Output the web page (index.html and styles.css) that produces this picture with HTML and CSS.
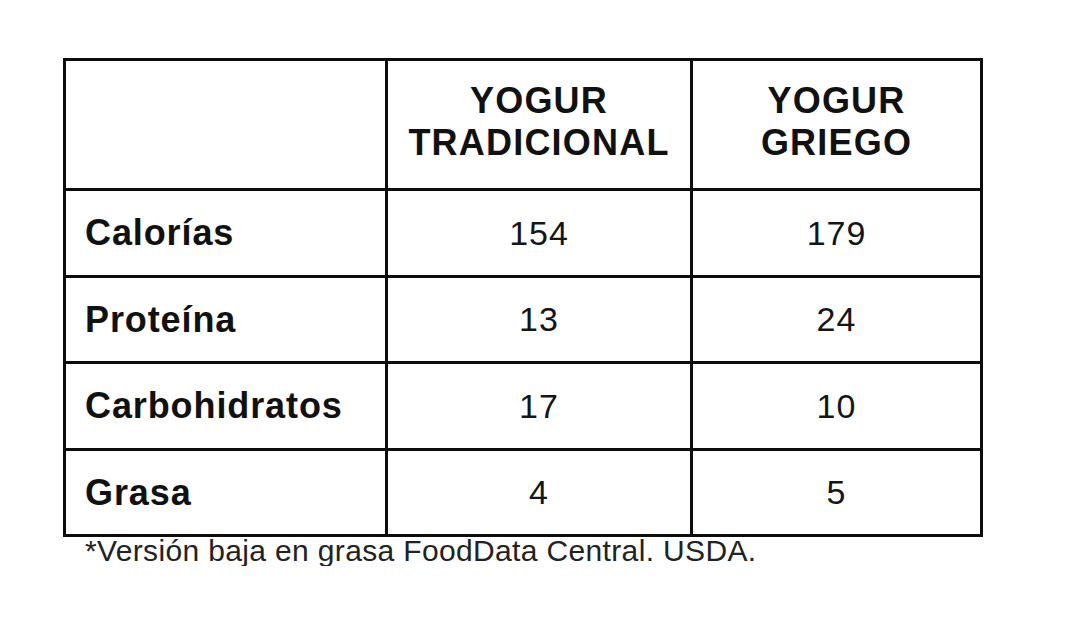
FILE: index.html
```html
<!DOCTYPE html>
<html lang="es">
<head>
<meta charset="utf-8">
<title>Yogur tradicional vs griego</title>
<link rel="stylesheet" href="styles.css">
</head>
<body>
<main class="page">
  <table class="nutri">
    <colgroup>
      <col class="c-label">
      <col class="c-trad">
      <col class="c-grie">
    </colgroup>
    <thead>
      <tr class="head-row">
        <th></th>
        <th>YOGUR<br>TRADICIONAL</th>
        <th>YOGUR<br>GRIEGO</th>
      </tr>
    </thead>
    <tbody>
      <tr class="r1">
        <th class="label">Calorías</th>
        <td>154</td>
        <td>179</td>
      </tr>
      <tr class="r2">
        <th class="label">Proteína</th>
        <td>13</td>
        <td>24</td>
      </tr>
      <tr class="r3">
        <th class="label">Carbohidratos</th>
        <td>17</td>
        <td>10</td>
      </tr>
      <tr class="r4">
        <th class="label">Grasa</th>
        <td>4</td>
        <td>5</td>
      </tr>
    </tbody>
  </table>
  <p class="note">*Versión baja en grasa FoodData Central. USDA.</p>
</main>
</body>
</html>
```

FILE: styles.css
```css
* { box-sizing: border-box; }

html, body {
  margin: 0;
  padding: 0;
  background: #ffffff;
}

body {
  font-family: "Liberation Sans", Arial, sans-serif;
  color: #111111;
}

.page {
  padding: 58px 0 0 63px;
}

.nutri {
  width: 920px;
  table-layout: fixed;
  border-collapse: separate;
  border-spacing: 0;
  border: 3px solid #0d0d0d;
}

.c-label { width: 322px; }
.c-trad { width: 305px; }
.c-grie { width: 287px; }

.nutri th,
.nutri td {
  padding: 0;
  border-right: 3px solid #0d0d0d;
  border-bottom: 3px solid #0d0d0d;
  text-align: center;
  vertical-align: middle;
}

.nutri tr > :last-child { border-right: none; }
.nutri tbody tr:last-child > * { border-bottom: none; }

.head-row th {
  height: 130px;
  font-size: 36px;
  line-height: 42px;
  font-weight: bold;
  letter-spacing: 1.2px;
  padding-bottom: 5px;
}

.r1 > * { height: 87px; }
.r2 > * { height: 86px; }
.r3 > * { height: 87px; }
.r4 > * { height: 83px; }

.nutri .label {
  text-align: left;
  padding-left: 19px;
  font-size: 36px;
  font-weight: bold;
  letter-spacing: 0.9px;
}

.nutri td {
  font-size: 34px;
  font-weight: normal;
  letter-spacing: 1px;
  color: #151515;
}

.note {
  margin: -1px 0 0 22px;
  font-size: 30px;
  line-height: 30px;
  letter-spacing: 0.35px;
  color: #222222;
}
```
